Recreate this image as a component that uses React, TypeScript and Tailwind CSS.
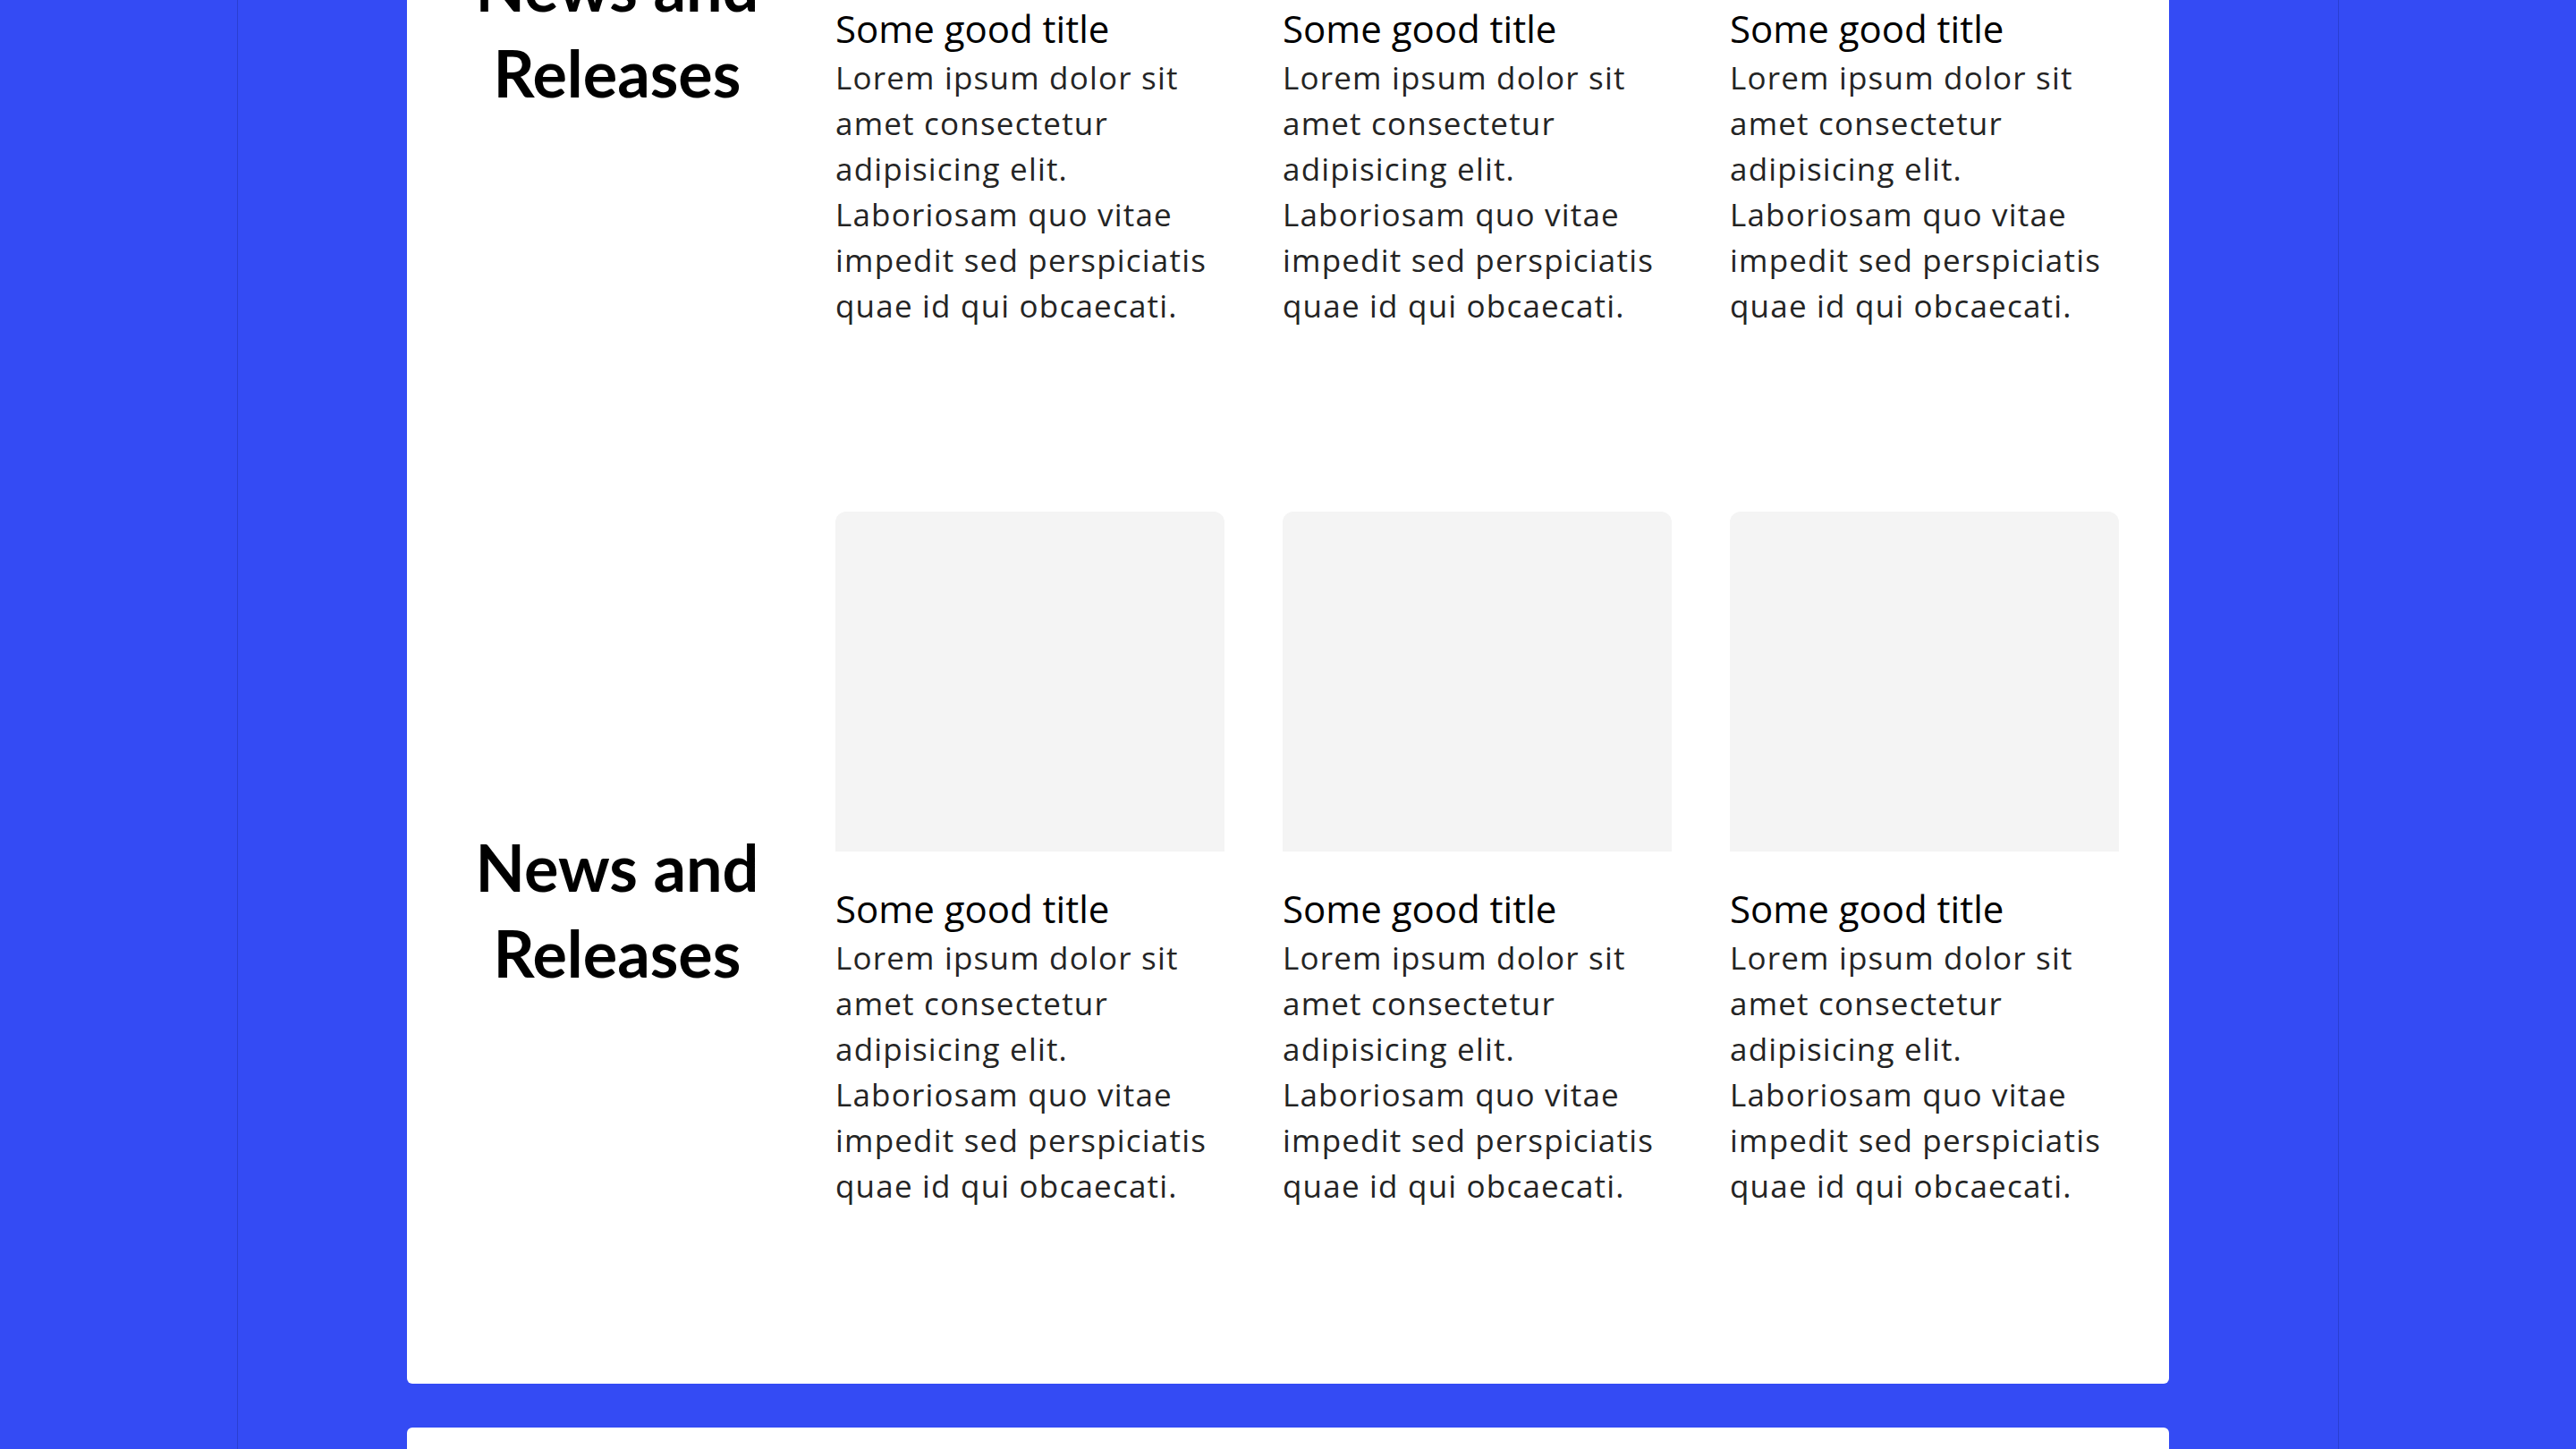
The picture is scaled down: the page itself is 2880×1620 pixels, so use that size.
import React from "react";

const lines = [
  "Lorem ipsum dolor sit",
  "amet consectetur",
  "adipisicing elit.",
  "Laboriosam quo vitae",
  "impedit sed perspiciatis",
  "quae id qui obcaecati.",
];

function Item() {
  return (
    <div className="flex flex-col">
      <div className="h-[380px] w-full rounded-t-[12px] bg-[#f4f4f4]" />
      <h3
        className="mt-[37px] text-[42px] leading-[54px] font-normal text-black whitespace-nowrap"
        style={{ fontFamily: '"Open Sans", sans-serif' }}
      >
        Some good title
      </h3>
      <p
        className="mt-[2px] text-[35px] leading-[51px] tracking-[1.2px] text-[#242424] font-normal"
        style={{ fontFamily: '"Open Sans", sans-serif' }}
      >
        {lines.map((l, i) => (
          <span key={i} className="block whitespace-nowrap">
            {l}
          </span>
        ))}
      </p>
    </div>
  );
}

function Row() {
  return (
    <div className="grid grid-cols-[358px_435px_435px_435px] gap-x-[65px]">
      <h2
        className="mt-[349px] self-start text-center text-[72px] leading-[96px] font-bold text-black"
        style={{ fontFamily: 'Lato, sans-serif' }}
      >
        News and
        <br />
        Releases
      </h2>
      <Item />
      <Item />
      <Item />
    </div>
  );
}

export default function App() {
  return (
    <div className="h-[1620px] w-full overflow-hidden bg-[#344bf4]">
      <div className="mx-auto flex h-full w-[2350px] flex-col border-x border-[#2a3fd2]">
        <div className="mx-auto -mt-[412px] w-[1970px] rounded-b-[6px] bg-white px-[56px] pb-[196px]">
          <div className="flex flex-col gap-y-[205px]">
            <Row />
            <Row />
          </div>
        </div>
        <div className="mx-auto mt-[49px] h-[600px] w-[1970px] shrink-0 rounded-t-[6px] bg-white" />
      </div>
    </div>
  );
}
